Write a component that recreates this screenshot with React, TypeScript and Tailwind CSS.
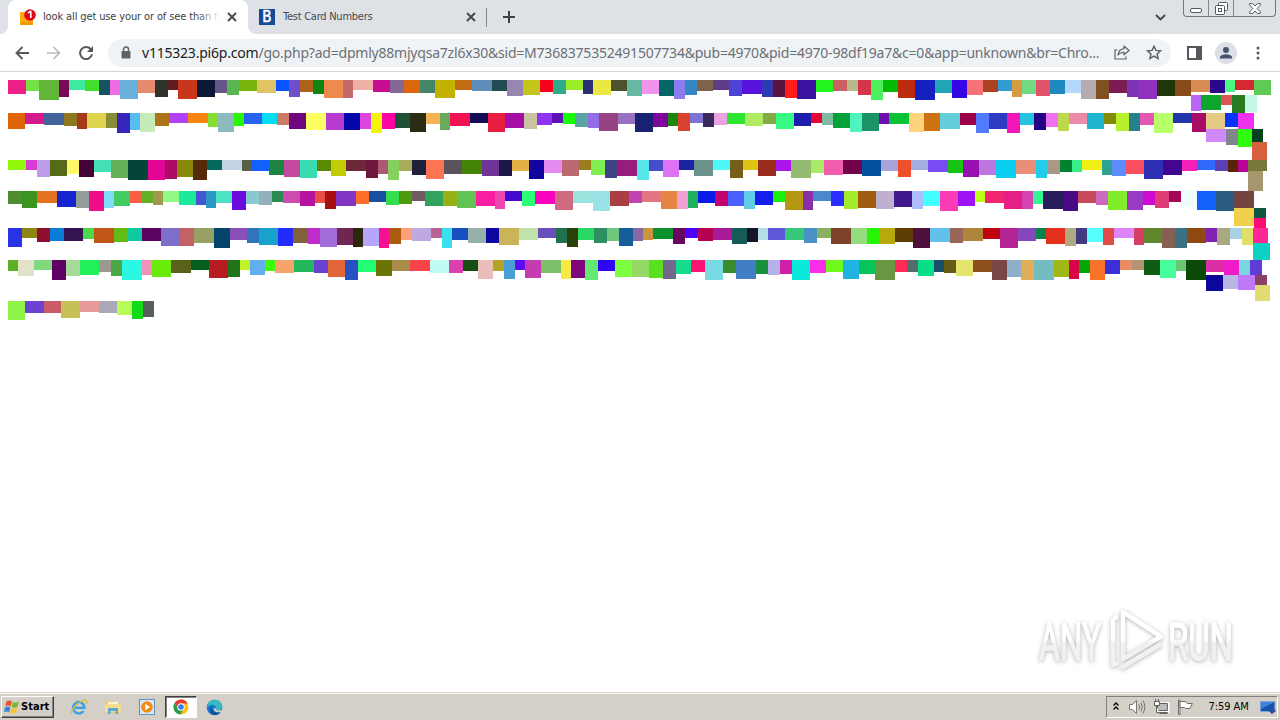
import React from "react";

type Line = { x: number; h: number; blocks: string };

// Each block is "right edge:height:colour"; the left edge is where the previous block ended.
const LINES: Line[] = [
  {
    x: 8,
    h: 15,
    blocks:
      "26:14:ee2087 39:11:74e244 59:20:62b73b 69:17:7b0959 85:10:3bec9c 99:11:44de2d 110:15:15535f 120:15:ee6be6 138:19:69b0dc 155:13:e68b6d 168:17:2f342d 178:10:621b1e 197:19:c8361c 215:17:0c1836 227:13:665589 239:15:5bb651 257:11:79b40a 276:13:e0c362 289:11:0954ff 300:17:6f4ecb 313:12:ae621c 324:14:118311 343:18:ee8a4e 353:18:c16b6b 373:10:efb1a7 390:12:c70d92 404:13:866894 420:13:db660b 435:13:438566 455:18:c3b100 472:10:c26c13 492:11:608eba 507:11:234b53 523:16:9787b0 540:15:c3c51b 553:12:fa001a 566:14:30ab8a 583:10:9aed24 593:14:2c2f73 611:15:ebe843 627:11:4c522c 642:16:66b8a3 659:14:f194ed 674:16:036768 685:19:8b7df0 697:15:3488c4 713:11:7e634a 729:10:603d86 742:16:4c43d6 762:14:5813dd 773:17:2c3bad 785:17:591441 797:18:ff1d1a 816:19:3a14a0 833:12:22f41f 847:11:cc6164 858:11:b9b98c 871:15:d63448 883:20:4eef5d 898:12:06bb06 915:18:bd2a0e 935:20:1620be 952:13:22a5b7 967:18:3606e6 983:15:f77277 998:12:ad401f 1012:11:2f9cd3 1022:17:d69c41 1036:14:72da85 1050:16:e05368 1065:14:1e89c0 1081:13:b4d7fc 1096:19:b5abb0 1109:19:805021 1127:13:7b1d54 1138:17:7c33b5 1157:19:9030bf 1175:16:1d360b 1191:16:874a18 1210:12:d98b55 1225:13:2a078a 1235:12:4df784 1254:10:d52830 1271:15:60ca57",
  },
  { x: 1191, h: 18, blocks: "1201:16:b866f5 1221:15:0ea52d 1232:10:db5456 1245:18:277a22 1257:17:c3f8e6" },
  {
    x: 8,
    h: 16,
    blocks:
      "25:16:df6403 44:11:d51b8b 64:12:45639b 77:13:8d7721 87:16:a53c17 106:15:dfd44d 117:15:878c35 130:20:3525bb 140:17:56bdee 155:19:c7ebb8 169:13:ad7319 188:10:b140f9 208:10:f98412 218:14:84de33 234:19:8fbabd 244:13:29f707 262:11:2763ee 277:11:03dcf5 289:12:cd7a66 306:16:6f067d 326:17:fdff63 344:17:b83bcf 360:17:0505a8 371:16:dd45e0 382:20:f3f507 395:16:f906a5 410:15:1f5138 426:19:2b2c14 440:11:f6b353 450:17:68aa5e 470:13:f11252 488:10:150c56 505:19:e91f41 524:15:a50fa5 537:16:c9c3a2 552:12:8f35f1 563:10:5c12b5 575:11:18fc08 588:14:5aa5a4 599:15:946de3 618:18:974283 635:11:9971c2 653:19:182473 668:14:7e059c 678:13:1b880d 690:18:d94231 703:10:7d72d3 714:14:3b285c 727:12:e9a3e0 745:11:2ee62f 763:13:b0eb64 776:11:82ab46 794:16:38f984 811:13:1e1cac 822:10:e40633 833:12:82baa1 850:15:05a23b 862:19:4ef3c0 879:18:1c9367 889:11:700fae 909:11:09c337 924:19:fdd479 940:18:cd7210 960:16:63cdda 976:12:9b0146 989:20:517bfa 1007:16:2e3bc0 1020:20:f316b9 1034:12:24c4df 1046:17:220386 1058:14:f070f2 1069:18:bcd94b 1087:11:eb8ba7 1104:16:20b3ce 1116:11:838a06 1129:18:b9f02c 1140:18:26818c 1154:12:e657b3 1173:20:b9ff6a 1192:10:2135ac 1206:19:a80b66 1225:16:e3cb86 1238:14:0534fc 1254:16:ef32ef",
  },
  { x: 1206, h: 13, blocks: "1226:13:d188fb 1238:16:80858e 1252:18:2ffc0f 1263:13:03401f" },
  { x: 1252, h: 18, blocks: "1267:18:d65f3d" },
  {
    x: 8,
    h: 11,
    blocks:
      "26:10:92f80a 37:10:d93bd3 50:17:bc9ce9 67:16:566a17 79:14:fdf769 94:17:440334 111:12:42e0b2 128:18:63b057 148:20:034537 165:20:e10596 177:19:ad0b63 193:17:898807 207:20:552c07 222:10:05685e 242:10:c5d3e6 252:11:595f45 269:11:1160ff 284:15:1d853f 300:17:c14aa0 317:18:39dcb1 331:11:5a8904 346:16:c3cb05 366:11:6c2937 378:18:6f183e 388:14:ac5a72 399:20:87d05d 412:11:a7ab5a 426:15:20203c 444:19:fd7455 462:14:5a535c 482:14:438306 499:16:713499 512:16:1d1946 529:11:e4b146 544:19:12059f 562:13:e58bf0 579:16:bb6a70 591:10:9b7e1c 605:15:80ee50 617:18:3e4286 637:16:971c7e 649:20:56e5e9 663:11:474cc9 679:17:dd72f4 694:10:1b25a2 713:16:6d918b 730:10:4ef7f8 743:18:775f1a 758:10:dfc413 776:16:9a2c1e 791:11:ab15ec 811:18:94bb72 824:13:aaeb6a 843:15:f15eae 862:14:71034a 881:16:04519f 898:11:aba3d7 911:17:ed502a 928:10:a3aee0 948:12:7a4af4 963:13:16c514 979:17:9910b2 996:15:bd77e0 1016:18:0bcef1 1036:14:e78f77 1047:18:22cde9 1060:14:aa9887 1072:12:04812e 1082:12:38f08a 1102:10:f2ef16 1112:15:2ea192 1126:16:5e8bfa 1144:14:fb4f61 1163:19:2e2fb2 1182:15:42068f 1197:11:f321b6 1215:10:2f69fc 1228:11:5d41b3 1238:12:5b2306 1248:12:b80395 1267:11:77793a",
  },
  { x: 1248, h: 20, blocks: "1263:20:a7976f" },
  {
    x: 8,
    h: 17,
    blocks:
      "22:13:4e8b31 37:17:39951f 57:12:e47320 76:16:1725d0 89:17:929f98 104:20:f00d87 114:17:80dcf6 130:15:42cd63 142:12:fa5f45 153:12:61af24 163:14:a39850 179:11:8ff983 196:14:1be99c 206:14:4454d2 216:17:2c97c3 232:12:4de2c5 246:19:6d0cde 259:13:86cacf 272:14:93b1bc 283:11:2a8a50 300:12:cd4ab0 315:15:b4149f 325:12:e84e45 336:18:a70f13 356:15:8135c3 369:13:fd6e2a 386:11:184f9f 399:14:34dc4f 412:13:4d9b0c 425:10:6f5b60 443:15:30a45c 457:15:97b018 476:17:62c254 495:15:fa1ea3 505:18:ec48b0 522:10:4409d1 535:15:2bff73 555:13:f804be 573:19:cf6a80 593:12:99e3df 610:20:9ae2e6 629:15:a93e43 642:12:c045b0 661:11:e27782 677:18:e58543 688:18:f0a0d3 698:17:1db15d 715:12:0a1be9 728:15:c2036d 744:15:4a60fe 755:18:62cbe7 773:14:151eec 785:11:1df00c 803:19:b69714 813:19:8a30a7 831:10:4b87cf 844:15:2b2eff 858:18:a3eb2b 876:17:9f5b10 894:18:c0b0cf 912:16:41188e 923:18:aebefb 940:15:44ffff 958:20:fc3cb6 975:15:9c12f3 985:11:baff14 1004:12:f2266e 1022:18:e61e85 1033:18:d642b1 1043:13:36f694 1063:18:291c5e 1078:20:490a87 1096:12:c84a5a 1108:14:ce69c0 1127:19:81ec29 1143:19:9a39c5 1155:14:ce09d0 1169:17:df3b74 1181:11:a10657 1197:16:effefd 1216:19:1460fb 1234:20:2b5b7e 1254:17:744540",
  },
  { x: 1234, h: 10, blocks: "1254:18:f0d04c 1266:10:105641" },
  { x: 1254, h: 10, blocks: "1266:10:fd0c73" },
  {
    x: 8,
    h: 15,
    blocks:
      "22:19:2833e4 37:10:8e8414 50:14:8e0e2f 64:13:0a7cd5 83:13:351250 94:11:4bd84b 114:15:c25619 128:14:63bc16 142:13:10c9a1 161:13:5d0462 180:18:7b6fc9 194:18:c16366 214:15:97a065 230:20:04436a 247:12:8a50b9 259:15:3074bd 278:17:18a1cb 293:18:232cff 308:15:816138 320:16:c02bcb 337:19:a46bdb 353:17:702652 363:19:2c260d 379:18:b7a5fa 389:20:f4108f 401:16:aa5b0d 412:12:fd9f78 431:13:beaae0 442:10:b86295 452:20:38e1ec 468:12:174fc0 486:15:96b0ac 499:15:0e07a1 519:17:cbb458 538:12:bfe3aa 556:10:694fb9 567:15:22714e 578:19:294008 594:12:29d964 607:15:2e8f62 619:13:6ec77d 633:18:155e9b 643:13:8668a4 653:12:cc943c 673:11:0d912f 685:16:69045f 698:10:4d00f7 713:13:b60351 732:12:a91a96 747:16:165b57 758:14:151529 768:12:b3dde7 785:12:6059d7 804:12:35c979 817:15:4893c3 831:10:88b060 851:16:7e4129 867:16:93dc80 880:16:25f307 895:16:b7a80c 913:14:5d3d04 930:20:4d103c 950:14:62c1ea 963:15:99665a 983:13:ae853b 1000:11:c10310 1018:20:b52494 1036:13:8545bb 1046:11:088548 1065:16:e62f1c 1076:18:b0aa82 1087:16:423b82 1103:14:54fffc 1114:17:e34b4b 1134:10:de84fb 1144:17:d73f62 1162:15:61872c 1175:20:875f55 1187:20:3b7182 1206:15:8f4913 1217:14:8122b4 1230:17:a8a881 1242:11:a8d1e1 1253:17:dfdf6a 1268:15:fd2797",
  },
  { x: 1253, h: 17, blocks: "1270:17:0dd1c3" },
  {
    x: 8,
    h: 15,
    blocks:
      "18:11:5bb023 34:16:e2e2c9 52:10:81d97e 66:20:5e0365 80:16:a7d998 99:15:22f058 111:12:9b9990 122:16:4ba645 142:20:2bf8e2 152:15:ef92b8 171:17:69ec0b 191:13:59611a 209:10:045f1c 228:18:b71c23 240:17:22741b 250:10:c2f128 265:15:63aeee 275:11:3bfd07 294:13:f6a46b 314:12:25b75b 328:13:6941d1 345:17:e3653a 358:20:2651c2 376:12:23fd73 392:16:6c7405 410:11:ab8b4a 430:11:f84549 449:13:c0fcf4 463:13:db3fae 478:11:154f11 493:19:ebbebb 504:11:b2a427 515:19:4a9dd5 525:10:5f0af4 541:18:c63bb0 561:13:7ec069 571:19:f5ea46 585:18:7e057c 598:20:62e972 615:11:2e06f5 632:17:7dfe41 649:17:94d964 663:18:59e120 676:19:72678c 691:14:14dd8d 705:12:fd1571 723:20:7adae4 736:13:388c2d 756:19:437dc3 768:14:18903c 780:15:b6b1e9 792:14:d11fa8 810:20:0be9db 826:13:fa2de8 843:12:70fa1c 859:19:1eb3e0 875:14:06c458 895:20:689642 907:12:fd2a57 918:12:526e6c 934:16:07de8a 944:12:1b4e6a 956:13:685a12 973:16:e5e46d 992:12:8c511b 1007:20:7a4747 1021:17:8fafc8 1034:20:e0ad59 1054:20:74bcbf 1069:17:a0b815 1079:19:db0449 1090:13:04a806 1105:20:fb7229 1120:14:3a2fd9 1132:10:e98b63 1144:10:b29474 1160:15:0f5d15 1176:18:47fd9b 1186:11:6ac771 1206:20:0b4906 1224:12:dc2fa6 1239:15:ef1bc9 1250:15:7ad6de 1262:15:5f3bd7",
  },
  { x: 1206, h: 10, blocks: "1223:16:0c069a 1238:14:b9b6e3 1255:15:bd79f8 1267:10:89406b" },
  { x: 1255, h: 16, blocks: "1270:16:e0dc73" },
  {
    x: 8,
    h: 20,
    blocks:
      "25:19:8ff246 44:12:6b42d1 61:12:ca5c6a 80:17:c7bf57 99:11:e89a9a 117:12:aaa8b9 132:14:b6fe57 143:18:12d919 154:16:575f5e",
  },
];

const URL_HOST = "v115323.pi6p.com";
const URL_PATH =
  "/go.php?ad=dpmly88mjyqsa7zl6x30&sid=M7368375352491507734&pub=4970&pid=4970-98df19a7&c=0&app=unknown&br=Chro...";

function BlockLine({ line }: { line: Line }) {
  let left = line.x;
  return (
    <div className="flex items-start" style={{ height: line.h, paddingLeft: line.x }}>
      {line.blocks.split(" ").map((entry, i) => {
        const [end, height, color] = entry.split(":");
        const width = Number(end) - left;
        left = Number(end);
        return <div key={i} className="shrink-0" style={{ width, height: Number(height), background: "#" + color }} />;
      })}
    </div>
  );
}

function CloseX() {
  return (
    <svg width="10" height="10" viewBox="0 0 10 10" stroke="#45494e" strokeWidth="1.9">
      <path d="M1 1l8 8M9 1l-8 8" />
    </svg>
  );
}

function TabStrip() {
  return (
    <div className="flex h-[34px] items-start bg-[#dee1e6]">
      <div className="flex h-[34px] w-2 items-end bg-white">
        <div className="h-full w-2 rounded-br-lg bg-[#dee1e6]" />
      </div>
      <div className="flex h-[34px] w-[240px] items-center rounded-t-lg bg-white pl-3">
        <svg width="16" height="17" viewBox="0 0 16 17">
          <path d="M0 3h13v13H0z" fill="#ffab10" />
          <path d="M0 13h13v3H0z" fill="#f59a08" />
          <circle cx="10" cy="6" r="5.8" fill="#e3051b" />
          <path d="M8 4.200l2-1.700h.8V9" stroke="#fff" strokeWidth="1.600" fill="none" />
        </svg>
        <div className="relative ml-[7px] w-[177px] overflow-hidden whitespace-nowrap text-[11px] leading-4 tracking-[-0.13px] text-[#3c4043]">
          look all get use your or of see than first
          <div className="absolute inset-y-0 right-0 w-6 bg-linear-to-r from-transparent to-white" />
        </div>
        <div className="ml-[7px] flex">
          <CloseX />
        </div>
      </div>
      <div className="h-[34px] w-2 bg-white">
        <div className="h-full w-2 rounded-bl-lg bg-[#dee1e6]" />
      </div>
      <div className="flex h-[34px] w-[230px] items-center pl-[3px]">
        <div className="flex h-4 w-4 items-center justify-center bg-[#164a97] text-[15px] leading-4 text-white">
          <span className="font-['DejaVu_Sans_Condensed','DejaVu_Sans',sans-serif] [-webkit-text-stroke:0.5px_#fff]">B</span>
        </div>
        <div className="ml-2 w-[183px] whitespace-nowrap text-[11px] leading-4 tracking-[-0.25px] text-[#45494e]">
          Test Card Numbers
        </div>
        <CloseX />
      </div>
      <div className="mt-2 h-[19px] w-px bg-[#85898e]" />
      <svg className="ml-4 mt-[11px]" width="12" height="12" viewBox="0 0 12 12" stroke="#3c4043" strokeWidth="2">
        <path d="M6 0v12M0 6h12" />
      </svg>
      <svg className="ml-auto mr-[17px] mt-[14px]" width="11" height="7" viewBox="0 0 11 7" fill="none" stroke="#45494e" strokeWidth="1.900">
        <path d="M1 1l4.500 4.500L10 1" />
      </svg>
      <div className="mr-[4px] flex h-[17px] w-[93px] rounded-b-[4px] border border-t-0 border-[#74787d] bg-[#dee1e6]">
        <div className="flex w-[25px] items-start justify-center border-r border-[#85898e] pt-[8px]">
          <svg width="12" height="5" viewBox="0 0 12 5" fill="#fff" stroke="#53575d">
            <rect x=".5" y=".5" width="11" height="4" rx="1.500" />
          </svg>
        </div>
        <div className="flex w-[25px] items-start justify-center border-r border-[#85898e] pt-[2px]">
          <svg width="13" height="13" viewBox="0 0 13 13" fill="#fff" stroke="#53575d">
            <rect x="3.500" y=".5" width="9" height="8" rx="1" />
            <rect x=".5" y="3.500" width="9" height="9" rx="1" />
            <rect x="3.500" y="6.500" width="3" height="3" />
          </svg>
        </div>
        <div className="flex flex-1 items-start justify-center pt-[3px]">
          <svg width="12" height="11" viewBox="0 0 12 11" fill="#fff" stroke="#53575d">
            <path d="M.7.600h3L6 3 8.300.600h3v1.600L8.200 5.500l3.100 3.200v1.700h-3L6 8 3.700 10.400h-3V8.700l3.100-3.200L.7 2.200z" />
          </svg>
        </div>
      </div>
    </div>
  );
}

function Toolbar() {
  return (
    <div className="flex h-[38px] items-center border-b border-[#d5d6d8] bg-white">
      <svg className="ml-[15px]" width="14" height="14" viewBox="0 0 14 14" fill="none" stroke="#55595e" strokeWidth="1.900">
        <path d="M14 7H1.500M7.500 1l-6 6 6 6" />
      </svg>
      <svg className="ml-[18px]" width="14" height="14" viewBox="0 0 14 14" fill="none" stroke="#b9bbbe" strokeWidth="1.700">
        <path d="M0 7h12.500M6.500 1l6 6-6 6" />
      </svg>
      <svg className="ml-[18px]" width="14" height="14" viewBox="0 0 14 14">
        <path d="M11.700 3.200A6 6 0 1 0 13 8.300" fill="none" stroke="#55595e" strokeWidth="2" />
        <path d="M14 0v6H8z" fill="#55595e" />
      </svg>
      <div className="ml-[15px] flex h-7 w-[1063px] items-center rounded-full bg-[#f0f3f5]">
        <svg className="mb-px ml-[13px]" width="10" height="13" viewBox="0 0 10 13">
          <path d="M2.500 6V3.500a2.500 2.500 0 0 1 5 0V6" fill="none" stroke="#5f6368" strokeWidth="1.500" />
          <rect x=".5" y="5" width="9" height="7.500" rx="1" fill="#5f6368" />
        </svg>
        <div className="ml-[11px] w-[972px] whitespace-nowrap font-['Noto_Sans',sans-serif] text-[14px] leading-5 tracking-[-0.213px] text-[#6b7075]">
          <span className="text-[#202124]">{URL_HOST}</span>
          {URL_PATH}
        </div>
        <svg width="16" height="15" viewBox="0 0 16 15" fill="none" stroke="#5f6368" strokeWidth="1.200">
          <path d="M3.500 5H1v9h11v-2.500" />
          <path d="M10 1l5 4.500-5 4.300V7.300C7.500 7.200 5.600 8 4 10c.4-3.500 2.600-6 6-6.400z" strokeLinejoin="round" />
        </svg>
        <svg className="ml-[16px]" width="16" height="15" viewBox="0 0 16 15" fill="none" stroke="#5f6368" strokeWidth="1.500">
          <path d="M8 1.200l1.900 4.200 4.600.500-3.400 3.100 1 4.500L8 11.200l-4.100 2.300 1-4.500L1.500 5.900l4.600-.5z" />
        </svg>
      </div>
      <svg className="ml-[16px]" width="15" height="14" viewBox="0 0 15 14">
        <path d="M1 1h13v12H1z" fill="none" stroke="#55595e" strokeWidth="2" />
        <path d="M9 1h5v12H9z" fill="#55595e" />
      </svg>
      <svg className="ml-[13px]" width="22" height="22" viewBox="0 0 22 22">
        <circle cx="11" cy="11" r="11" fill="#dce0e6" />
        <circle cx="11" cy="8" r="3" fill="#46546e" />
        <path d="M5 16.500v-1.300c0-2 3.800-3 6-3s6 1 6 3v1.300z" fill="#46546e" />
      </svg>
      <svg className="ml-[19px]" width="4" height="14" viewBox="0 0 4 14" fill="#55595e">
        <circle cx="2" cy="2" r="1.500" />
        <circle cx="2" cy="7" r="1.500" />
        <circle cx="2" cy="12" r="1.500" />
      </svg>
    </div>
  );
}

function Watermark() {
  return (
    <svg className="absolute left-[1030px] top-[600px] drop-shadow-[0_1px_2px_rgba(0,0,0,0.3)]" width="220" height="80" viewBox="0 0 220 80">
      <defs>
        <linearGradient id="sheen" gradientUnits="userSpaceOnUse" x1="0" y1="0" x2="0" y2="80">
          <stop offset=".5" stopColor="#fff" />
          <stop offset=".54" stopColor="#f1f1f1" />
        </linearGradient>
      </defs>
      <g className="font-['Roboto',sans-serif]" fill="url(#sheen)" stroke="url(#sheen)" strokeWidth="1.500" fontSize="51">
        <text x="9" y="60" textLength="62" lengthAdjust="spacingAndGlyphs">ANY</text>
        <text x="138" y="60" textLength="65" lengthAdjust="spacingAndGlyphs">RUN</text>
      </g>
      <g fill="none" stroke="url(#sheen)" strokeWidth="4.500" strokeLinejoin="round">
        <path d="M93 12v47l38-22.500z" />
        <path d="M83 18v47l5-2M91 68l40-24" />
        <path d="M83 18l5-1" />
      </g>
    </svg>
  );
}

function ChromeLogo() {
  return (
    <svg width="16" height="16" viewBox="0 0 16 16">
      <circle cx="8" cy="8" r="7.500" fill="#fbc116" />
      <path d="M1.500 4.200A7.500 7.500 0 0 1 14.600 4.500H8L5 9.800z" fill="#e33b2e" />
      <path d="M1.500 4.200A7.500 7.500 0 0 0 7.300 15.500l3.600-5.700L8 11.500 5 9.800z" fill="#269e4c" />
      <circle cx="8" cy="8" r="3.700" fill="#fff" />
      <circle cx="8" cy="8" r="2.800" fill="#3b7de8" />
    </svg>
  );
}

function Taskbar() {
  return (
    <div className="flex h-[28px] items-center border-t border-[#d4d0c8] bg-[#d4d0c8] pt-px shadow-[inset_0_1px_0_#fff]">
      <div className="ml-px flex h-[22px] w-[53px] items-center border border-b-[#404040] border-l-white border-r-[#404040] border-t-white pl-[2px] shadow-[inset_-1px_-1px_0_#808080]">
        <svg width="16" height="16" viewBox="0 0 16 16">
          <path d="M2.500 2.500C4.500 1 6.300 1.400 8 2.500L6.700 7.300C5 6.300 3.300 6.200 1.300 7.300z" fill="#e8552b" />
          <path d="M9 3c2 1 4 1 6-.4l-1.300 5C12 9 9.800 8.900 7.700 7.700z" fill="#77b934" />
          <path d="M1 8.400c2-1.200 3.800-1 5.400 0l-1.300 4.800C3.400 12.200 1.700 12.200 0 13.200z" fill="#3684d2" />
          <path d="M7.400 8.900c2 1 4 1.100 6-.3l-1.300 4.900c-2 1.400-4 1.300-6 .3z" fill="#fbc32b" />
        </svg>
        <span className="ml-px text-[11px] font-bold tracking-[0.05px] text-black">Start</span>
      </div>
      <svg className="ml-[16px]" width="18" height="18" viewBox="0 0 18 18" fill="none">
        <path d="M4 9.700h10.500A5.700 5.700 0 1 0 13.500 13" stroke="#38a4e3" strokeWidth="2.600" />
        <path d="M1.500 16C-.5 12 12 .5 16.500 2.500c1 .5.700 2-.2 3.500" stroke="#e5b93c" strokeWidth="1.300" />
      </svg>
      <svg className="ml-[16px]" width="18" height="16" viewBox="0 0 18 16">
        <path d="M2 2h6l1 2h7v10H2z" fill="#e9cb6b" />
        <path d="M4 3h10v7H4z" fill="#f8f4d5" />
        <path d="M1 5h16v8H1z" fill="#f3dd8c" />
        <path d="M4 15V9h10v6h-2.500v-3h-5v3z" fill="#58a9d9" />
      </svg>
      <svg className="ml-[17px]" width="16" height="16" viewBox="0 0 16 16">
        <rect x=".5" y=".5" width="15" height="15" fill="#d7e9f9" stroke="#6393bd" />
        <circle cx="8" cy="8" r="5.800" fill="#f28a18" />
        <path d="M6.200 4.800v6.400L11.200 8z" fill="#fff" />
      </svg>
      <div className="ml-[10px] flex h-[22px] w-[32px] items-center justify-center border border-b-white border-l-[#404040] border-r-white border-t-[#404040] bg-white shadow-[inset_1px_1px_0_#808080]">
        <ChromeLogo />
      </div>
      <svg className="ml-[9px]" width="17" height="17" viewBox="0 0 17 17">
        <circle cx="8.500" cy="8.500" r="7.800" fill="#1279cc" />
        <path d="M1 8C1.500 3 5 .7 8.800.7c4.700 0 7.600 3.500 7.500 6.600 0 2.500-2 3.900-4.300 3.900-1.700 0-2.700-.7-2.200-1.600C11 7 7 3.500 1 8z" fill="#39b9c0" />
        <path d="M6.200 8.500C5 12 8.500 14.500 14.500 13.300 11 18 4 16 3.800 10.700c0-2 1-3 2.400-2.200z" fill="#114f9e" />
        <path d="M10 9.500c-1 1.300.7 2.200 3.500 1.800l3 .2-1.500 1.500c-5 1-8-1-7-4z" fill="#d4d0c8" />
      </svg>
      <div className="ml-auto mr-[2px] flex h-[22px] w-[172px] items-center border border-b-white border-l-[#808080] border-r-white border-t-[#808080]">
        <svg className="mb-[3px] ml-[6px]" width="6" height="8" viewBox="0 0 6 8" fill="none" stroke="#000" strokeWidth="1.300">
          <path d="M.5 3.500L3 1l2.500 2.500M.5 7.500L3 5l2.500 2.500" />
        </svg>
        <svg className="ml-[10px]" width="17" height="16" viewBox="0 0 17 16" stroke="#707070" fill="none">
          <path d="M.5 5.500h3l4-4v13l-4-4h-3z" fill="#fff" />
          <path d="M10 5.500q1.500 2.500 0 5M12 3.500q3 4.500 0 9M14 1.500q4 6.500 0 13" />
        </svg>
        <svg className="ml-[7px]" width="17" height="16" viewBox="0 0 17 16" stroke="#5b5b5b">
          <path d="M5.500 4.500h10v8h-10z" fill="#c8c8c8" stroke="#fff" strokeWidth="2.500" />
          <path d="M4.500 4.500h10v7h-10z" fill="#bdbdbd" />
          <path d="M6.500 13.500h8v1h-8z" fill="#fff" />
          <path d="M1.500 2.500h5v4h-5zM2.500 0v2M5.500 0v2M3.500 7v6.500h3" fill="#fff" />
        </svg>
        <svg className="ml-[7px]" width="17" height="16" viewBox="0 0 17 16" stroke="#6a6a6a" fill="#fff">
          <path d="M1.500 1v14.500h1.500V1z" />
          <path d="M3 2.500h6l1.500 2h5l-2.500 5H8.500L7.500 8.500H3z" />
        </svg>
        <span className="ml-[15px] w-[43px] whitespace-nowrap text-[11px] tracking-[-0.06px] text-black">7:59 AM</span>
        <svg className="ml-[9px]" width="17" height="15" viewBox="0 0 17 15">
          <path d="M.5 1.500h14.500v10H.5z" fill="#1553b0" stroke="#7fa6d9" />
          <path d="M1 2h13.500L1 9z" fill="#3f83d8" />
          <path d="M9 11l4-3 3 3-4 3z" fill="#2a4d94" />
        </svg>
      </div>
    </div>
  );
}

export default function App() {
  return (
    <div className="relative flex h-[720px] w-[1280px] flex-col overflow-hidden bg-white font-['DejaVu_Sans_Condensed','DejaVu_Sans',sans-serif]">
      <TabStrip />
      <Toolbar />
      <main className="flex-1 pt-2">
        {LINES.map((line, i) => (
          <BlockLine key={i} line={line} />
        ))}
      </main>
      <Watermark />
      <Taskbar />
    </div>
  );
}
